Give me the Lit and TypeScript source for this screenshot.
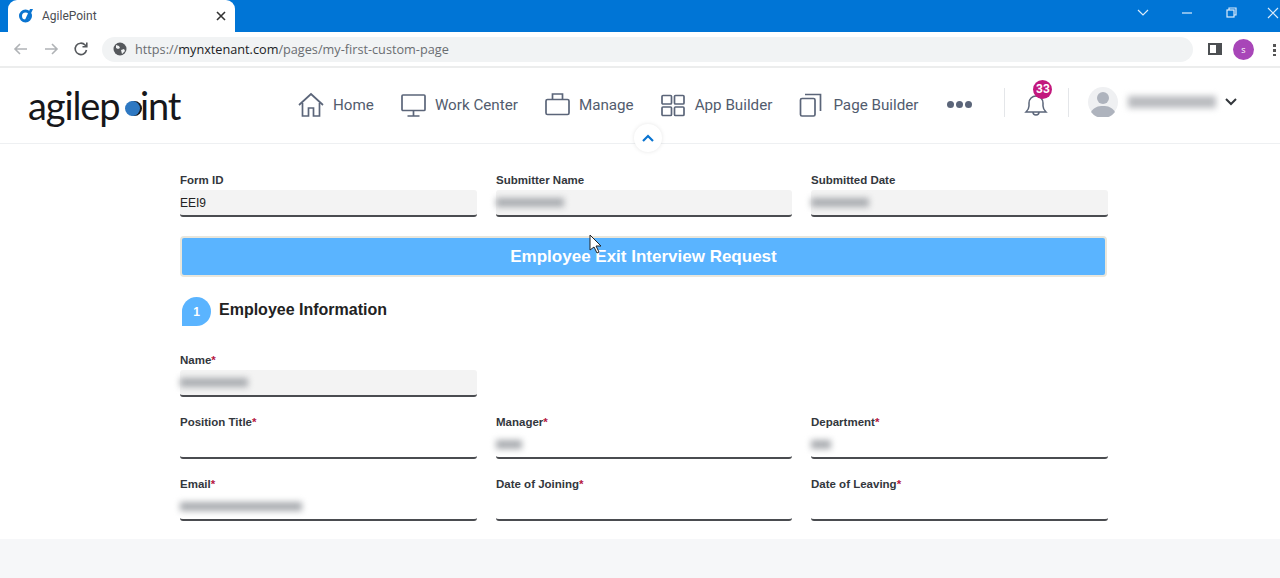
import { LitElement, html, css, svg } from 'lit';
import { customElement } from 'lit/decorators.js';

type Field = { label: string; required?: boolean; value?: string; blur?: number; filled?: boolean };

const topRow: Field[] = [
  { label: 'Form ID', value: 'EEI9', filled: true },
  { label: 'Submitter Name', blur: 68, filled: true },
  { label: 'Submitted Date', blur: 58, filled: true },
];
const nameRow: Field[] = [{ label: 'Name', required: true, blur: 68, filled: true }];
const jobRow: Field[] = [
  { label: 'Position Title', required: true },
  { label: 'Manager', required: true, blur: 26 },
  { label: 'Department', required: true, blur: 20 },
];
const dateRow: Field[] = [
  { label: 'Email', required: true, blur: 122 },
  { label: 'Date of Joining', required: true },
  { label: 'Date of Leaving', required: true },
];

// nav icons, all on a 26x26 box
const navItems = [
  { label: 'Home', icon: svg`<path d="M1 13 13 2l12 11"/><path d="M4.500 11v13h6v-8h5v8h6V11"/>` },
  { label: 'Work Center', icon: svg`<rect x="1" y="3" width="23" height="15.500" rx="1"/><path d="M12.500 18.500v5M6.500 24h12"/>` },
  { label: 'Manage', icon: svg`<rect x="1" y="7.500" width="23" height="15" rx="1.500"/><path d="M7.500 7.500V2h10v5.500"/>` },
  { label: 'App Builder', icon: svg`<rect x="1" y="3.500" width="9.500" height="8.500" rx="1"/><rect x="13.500" y="3.500" width="9.500" height="8.500" rx="1"/><rect x="1" y="15" width="9.500" height="8.500" rx="1"/><rect x="13.500" y="15" width="9.500" height="8.500" rx="1"/>` },
  { label: 'Page Builder', icon: svg`<rect x="1.500" y="6.500" width="14.500" height="17.500" rx="1.500"/><path d="M6 2.500h15.500V19"/>` },
];

@customElement('app-root')
export class AppRoot extends LitElement {
  static styles = css`
    :host {
      display: block;
      position: relative;
      height: 578px;
      overflow: hidden;
      background: #f6f7f9;
      font-family: "Liberation Sans", Arial, sans-serif;
    }
    /* browser frame */
    .titlebar {
      display: flex;
      align-items: flex-end;
      height: 32px;
      padding-left: 8px;
      background: #0075d6;
    }
    .tab {
      display: flex;
      align-items: center;
      width: 227px;
      height: 32px;
      box-sizing: border-box;
      padding: 0 9px 0 11px;
      gap: 9px;
      background: #fff;
      border-radius: 9px 9px 0 0;
      font: 12px Roboto, sans-serif;
      color: #4a4d52;
    }
    .tab span { flex: 1; }
    .winctl {
      margin-left: auto;
      display: flex;
      align-items: flex-start;
      align-self: stretch;
    }
    .winctl svg { display: block; width: 44px; height: 26px; fill: none; stroke: #dcecfa; stroke-width: 1.200; }
    .winctl svg.close { margin: 0 -15px 0 -2px; }
    .toolbar {
      display: flex;
      align-items: center;
      height: 36px;
      box-sizing: border-box;
      padding-left: 12px;
      background: #fff;
      border-bottom: 2px solid #eceded;
    }
    .toolbar .nav { display: block; width: 18px; height: 18px; margin-right: 12px; fill: none; stroke-width: 1.600; }
    .omni {
      display: flex;
      align-items: center;
      gap: 8px;
      width: 1091px;
      height: 25px;
      box-sizing: border-box;
      padding-left: 11px;
      background: #f1f3f4;
      border-radius: 13px;
      font: 12.700px "Open Sans", sans-serif;
      color: #6a6d71;
    }
    .omni b { font-weight: 400; color: #202124; }
    .panel { width: 14px; height: 12px; box-sizing: border-box; margin-left: 15px; border: 2px solid #4c4f52; border-right-width: 6px; }
    .profile {
      display: flex;
      align-items: center;
      justify-content: center;
      width: 21px;
      height: 21px;
      margin-left: 11px;
      border-radius: 50%;
      background: #a846b8;
      color: #fff;
      font: 9px "Open Sans", sans-serif;
    }
    .kebab { margin-left: 19px; width: 3px; height: 13px; background: radial-gradient(circle at center, #555 1.500px, transparent 1.600px) 0 0 / 3px 5px; }

    /* app header */
    header {
      position: relative;
      display: flex;
      align-items: center;
      height: 76px;
      box-sizing: border-box;
      padding: 0 0 2px 28px;
      background: #fff;
      border-bottom: 1px solid #eef0f2;
    }
    .logo {
      width: 270px;
      flex: none;
      font: 400 38px/1 Lato, sans-serif;
      letter-spacing: -1.100px;
      color: #17171a;
    }
    .logo .dot {
      position: relative;
      color: transparent;
    }
    .logo .dot::after {
      content: "";
      position: absolute;
      left: 5px;
      top: 19px;
      width: 15px;
      height: 15px;
      border-radius: 50%;
      background: #2e78c2;
      box-shadow: 2px 0 0 #17171a;
    }
    nav { display: flex; align-items: center; gap: 27px; }
    .item {
      display: flex;
      align-items: center;
      gap: 8px;
      font: 15.200px Roboto, sans-serif;
      color: #525c6e;
    }
    .item:first-child { gap: 9px; }
    .item svg { display: block; width: 26px; height: 26px; fill: none; stroke: #5b6579; stroke-width: 1.700; }
    .more { display: flex; gap: 2px; margin-left: 2px; }
    .more i { width: 7px; height: 7px; border-radius: 50%; background: #5b6579; }
    .divider { width: 1px; height: 29px; margin-bottom: 5px; background: #e4e6e9; }
    .divider.first { margin-left: 32px; }
    .bell { position: relative; width: 26px; height: 26px; margin: 0 19px 2px 18px; }
    .bell svg { display: block; width: 26px; height: 26px; fill: none; stroke: #5b6579; stroke-width: 1.500; }
    .badge {
      position: absolute;
      left: 10px;
      top: -11px;
      width: 19px;
      height: 19px;
      border-radius: 50%;
      background: #c2187d;
      color: #fff;
      font: 700 12px/19px Roboto, sans-serif;
      text-align: center;
    }
    .user { display: flex; align-items: center; margin: 0 0 5px 19px; }
    .user svg.avatar { display: block; width: 30px; height: 30px; }
    .smudge { display: block; height: 9px; background: #a9acb0; filter: blur(3px); }
    .user .smudge { width: 88px; height: 12px; margin: 0 9px 0 10px; background: #b9bbbf; }
    .user svg.chev { display: block; width: 12px; height: 8px; fill: none; stroke: #33373c; stroke-width: 2; }
    .collapse {
      position: absolute;
      left: 634px;
      top: 56px;
      display: flex;
      align-items: center;
      justify-content: center;
      width: 28px;
      height: 28px;
      border-radius: 50%;
      background: #fff;
      box-shadow: 0 0 4px rgba(0, 0, 0, 0.1);
    }
    .collapse svg { display: block; width: 12px; height: 8px; fill: none; stroke: #0a74d0; stroke-width: 2.200; }

    /* form */
    main {
      height: 395px;
      box-sizing: border-box;
      padding: 30px 172px 0 180px;
      background: #fff;
    }
    .row {
      display: grid;
      grid-template-columns: 297px 296px 297px;
      column-gap: 19px;
      height: 62px;
    }
    .field { display: flex; flex-direction: column; min-width: 0; }
    .field label { height: 16px; font: 700 11.500px/12px "Liberation Sans", sans-serif; color: #33373d; }
    .req { color: #b5173f; }
    .input {
      display: flex;
      align-items: center;
      height: 27px;
      box-sizing: border-box;
      border-bottom: 2px solid #4a4c50;
      border-radius: 0 0 3px 3px;
      font: 12px "Liberation Sans", sans-serif;
      color: #222;
    }
    .input.filled { background: #f3f3f3; border-radius: 3px; }
    .banner {
      display: flex;
      align-items: center;
      justify-content: center;
      width: 927px;
      height: 41px;
      box-sizing: border-box;
      background: #5ab4ff;
      border: 2px solid #e9e6db;
      border-radius: 4px;
      color: #fff;
      font: 700 17px "Liberation Sans", sans-serif;
    }
    .section {
      display: flex;
      align-items: flex-start;
      gap: 8px;
      height: 57px;
      margin: 20px 0 0 2px;
    }
    .num {
      display: flex;
      align-items: center;
      justify-content: center;
      width: 29px;
      height: 29px;
      background: #5ab4ff;
      border-radius: 50% 50% 50% 0;
      color: #fff;
      font: 700 12px "Liberation Sans", sans-serif;
    }
    h2 {
      margin: 3px 0 0;
      font: 700 16px/20px "Liberation Sans", sans-serif;
      color: #222;
    }
    .cursor { position: absolute; left: 589px; top: 234px; width: 13px; height: 20px; }
  `;

  private renderField(f: Field) {
    return html`
      <div class="field">
        <label>${f.label}${f.required ? html`<span class="req">*</span>` : ''}</label>
        <div class="input ${f.filled ? 'filled' : ''}">
          ${f.value ?? ''}
          ${f.blur ? html`<span class="smudge" style="width:${f.blur}px"></span>` : ''}
        </div>
      </div>
    `;
  }

  private renderRow(fields: Field[]) {
    return html`<div class="row">${fields.map((f) => this.renderField(f))}</div>`;
  }

  render() {
    return html`
      <div class="titlebar">
        <div class="tab">
          <svg width="14" height="14" viewBox="0 0 14 14">
            <circle cx="6.500" cy="7" r="5" fill="none" stroke="#0a74d0" stroke-width="3"/>
            <path d="M11 0h3L8 13H5z" fill="#0a74d0"/>
          </svg>
          <span>AgilePoint</span>
          <svg width="10" height="10" viewBox="0 0 10 10" fill="none" stroke="#333" stroke-width="1.600"><path d="M1 1l8 8M9 1l-8 8"/></svg>
        </div>
        <div class="winctl">
          <svg viewBox="0 0 44 26"><path d="M17 10l5 5 5-5"/></svg>
          <svg viewBox="0 0 44 26"><path d="M17 13h10"/></svg>
          <svg viewBox="0 0 44 26"><rect x="18" y="10" width="7" height="7"/><path d="M20 10V8h7v7h-2"/></svg>
          <svg class="close" viewBox="0 0 44 26"><path d="M17 8l10 10M27 8L17 18"/></svg>
        </div>
      </div>
      <div class="toolbar">
        <svg class="nav" viewBox="0 0 18 18" stroke="#b0b3b6"><path d="M15 9H3M8 4 3 9l5 5"/></svg>
        <svg class="nav" viewBox="0 0 18 18" stroke="#b0b3b6"><path d="M3 9h12M10 4l5 5-5 5"/></svg>
        <svg class="nav" viewBox="0 0 18 18" stroke="#55585c"><path d="M14.500 10a5.700 5.700 0 1 1-1.400-5l1.400 1.500"/><path d="M14.800 2.500v4.300h-4.300"/></svg>
        <div class="omni">
          <svg width="14" height="14" viewBox="0 0 14 14">
            <circle cx="7" cy="7" r="6.500" fill="#55585c"/>
            <path d="M3 3l3 1 1 2-2 1-2-1zM8 8l3-1 1 2-3 3z" fill="#f1f3f4"/>
          </svg>
          <span>https://<b>mynxtenant.com</b>/pages/my-first-custom-page</span>
        </div>
        <div class="panel"></div>
        <div class="profile">s</div>
        <div class="kebab"></div>
      </div>
      <header>
        <div class="logo">agilep<span class="dot">o</span>int</div>
        <nav>
          ${navItems.map(
            (n) => html`<div class="item"><svg viewBox="0 0 26 26">${n.icon}</svg>${n.label}</div>`
          )}
          <div class="more"><i></i><i></i><i></i></div>
        </nav>
        <div class="divider first"></div>
        <div class="bell">
          <svg viewBox="0 0 26 26">
            <path d="M3 21c2-2 3-3 3-6v-3a7 7 0 0 1 14 0v3c0 3 1 4 3 6z"/>
            <path d="M10 21a3 3 0 0 0 6 0"/>
          </svg>
          <div class="badge">33</div>
        </div>
        <div class="divider"></div>
        <div class="user">
          <svg class="avatar" viewBox="0 0 30 30">
            <circle cx="15" cy="15" r="15" fill="#eff0f2"/>
            <circle cx="15" cy="11" r="6" fill="#aeb3bd"/>
            <path d="M3 25c3-5 7-6 12-6s9 1 12 6a15 15 0 0 1-24 0z" fill="#aeb3bd"/>
          </svg>
          <span class="smudge"></span>
          <svg class="chev" viewBox="0 0 12 8"><path d="M1 1l5 5 5-5"/></svg>
        </div>
        <div class="collapse"><svg viewBox="0 0 12 8"><path d="M1 7l5-5 5 5"/></svg></div>
      </header>
      <main>
        ${this.renderRow(topRow)}
        <div class="banner">Employee Exit Interview Request</div>
        <div class="section">
          <div class="num">1</div>
          <h2>Employee Information</h2>
        </div>
        ${this.renderRow(nameRow)}
        ${this.renderRow(jobRow)}
        ${this.renderRow(dateRow)}
      </main>
      <svg class="cursor" viewBox="0 0 13 20">
        <path d="M1 1v15l4-3 3 6 2-1-3-6h5z" fill="#fff" stroke="#222" stroke-width="1"/>
      </svg>
    `;
  }
}
